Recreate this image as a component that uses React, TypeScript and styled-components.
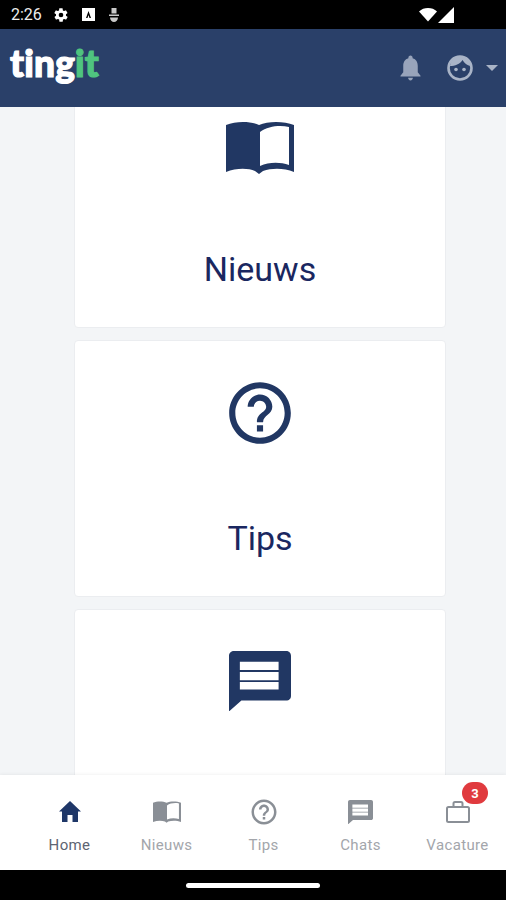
import React from "react";
import styled, { createGlobalStyle } from "styled-components";

const GlobalStyle = createGlobalStyle`
  html, body {
    margin: 0;
    padding: 0;
    background: #000;
  }
  * {
    box-sizing: border-box;
  }
`;

const BookIcon = ({ size, color }: { size: number; color: string }) => (
  <svg width={size} height={(size * 53) / 68} viewBox="0 0 68 53">
    <path
      fill={color}
      fillRule="evenodd"
      d="M0 4C10 0 24 0 33 4 42 0 58 0 68 4V51C58 47 46 47 37 50L33 53 29 50C22 47 10 47 0 51zM34 11V45C43 41 54 41 63 44V6C54 4 42 5 34 11z"
    />
  </svg>
);

const HelpIcon = ({ size, color }: { size: number; color: string }) => (
  <svg width={size} height={size} viewBox="0 0 24 24">
    <path
      fill={color}
      d="M11 18h2v-2h-2v2zm1-16C6.480 2 2 6.480 2 12s4.480 10 10 10 10-4.480 10-10S17.520 2 12 2zm0 18c-4.410 0-8-3.590-8-8s3.590-8 8-8 8 3.590 8 8-3.590 8-8 8zm0-14c-2.210 0-4 1.790-4 4h2c0-1.100.9-2 2-2s2 .9 2 2c0 2-3 1.750-3 5h2c0-2.250 3-2.500 3-5 0-2.210-1.790-4-4-4z"
    />
  </svg>
);

const ChatIcon = ({ size, color }: { size: number; color: string }) => (
  <svg width={size} height={(size * 19.500) / 20} viewBox="2 2 20 19.500">
    <path
      fill={color}
      fillRule="evenodd"
      d="M3.500 2h17C21.400 2 22 2.700 22 3.500v13c0 .9-.7 1.500-1.500 1.500H6L2 21.500V3.500C2 2.700 2.700 2 3.500 2zM5.500 5.500v2.600H18V5.500zM5.500 8.800h12.500v2.600H5.500zM5.500 12v2.400H18V12z"
    />
  </svg>
);

const HomeIcon = () => (
  <svg width="24" height="22" viewBox="0 0 24 22">
    <path fill="#1f3768" d="M12 0 23 10.500h-3V21h-5.500v-7h-5v7H4V10.500H1z" />
  </svg>
);

const BagIcon = () => (
  <svg width="26" height="24" viewBox="0 0 26 24">
    <path
      fill="none"
      stroke="#8a8f96"
      strokeWidth="2"
      d="M3.500 7h19A1.500 1.500 0 0 1 24 8.500v12a1.500 1.500 0 0 1-1.500 1.500h-19A1.500 1.500 0 0 1 2 20.500v-12A1.500 1.500 0 0 1 3.500 7zM8.500 7V3.500A1.500 1.500 0 0 1 10 2h6a1.500 1.500 0 0 1 1.500 1.500V7"
    />
  </svg>
);

const BellIcon = () => (
  <svg width="21" height="26" viewBox="0 0 22 26">
    <path
      fill="#98a4bb"
      d="M11 0c1.300 0 2.200 1 2.200 2.300v.6C17 4 18.600 7 18.600 11v6.500L21.500 21v1H.5v-1l2.900-3.500V11c0-4 1.600-7 5.400-8.100v-.6C8.800 1 9.700 0 11 0zM8.500 23.300h5c0 1.500-1.100 2.700-2.500 2.700s-2.500-1.200-2.500-2.700z"
    />
  </svg>
);

const FaceIcon = () => (
  <svg width="26" height="26" viewBox="0 0 26 26">
    <circle cx="13" cy="13" r="11.500" fill="none" stroke="#a9b4c7" strokeWidth="2.600" />
    <path fill="#a9b4c7" d="M3 11c5 0 10-2 12.500-6 2 3 4.500 5.500 8 6-1-6-5.500-10-10.500-10S4 5 3 11z" />
    <circle cx="9" cy="14.500" r="1.800" fill="#a9b4c7" />
    <circle cx="17" cy="14.500" r="1.800" fill="#a9b4c7" />
  </svg>
);

const GearIcon = () => (
  <svg width="16" height="16" viewBox="0 0 24 24">
    <path
      fill="#fff"
      d="M19.400 13c.1-.3.1-.7.1-1s0-.7-.1-1l2.100-1.600c.2-.2.2-.4.100-.6l-2-3.500c-.1-.2-.4-.3-.6-.2l-2.500 1c-.5-.4-1.100-.7-1.700-1l-.4-2.700c0-.2-.2-.4-.5-.4h-4c-.2 0-.4.200-.5.400l-.4 2.700c-.6.300-1.200.6-1.700 1l-2.500-1c-.2-.1-.5 0-.6.200l-2 3.500c-.1.200-.1.400.1.600L4.600 11c-.1.300-.1.700-.1 1s0 .7.100 1l-2.100 1.600c-.2.200-.2.400-.1.600l2 3.500c.1.200.4.300.6.200l2.500-1c.5.400 1.100.7 1.700 1l.4 2.700c0 .2.200.4.500.4h4c.2 0 .4-.2.500-.4l.4-2.700c.6-.3 1.200-.6 1.700-1l2.500 1c.2.100.5 0 .6-.2l2-3.500c.1-.2.1-.4-.1-.6zM12 15.500a3.500 3.500 0 1 1 0-7 3.500 3.500 0 0 1 0 7z"
    />
  </svg>
);

const AppBoxIcon = () => (
  <svg width="13" height="13" viewBox="0 0 13 13">
    <path fill="#fff" fillRule="evenodd" d="M0 0h13v13H0zM6.500 3 4 10h1.500l1-3 1 3H9z" />
  </svg>
);

const DebugIcon = () => (
  <svg width="12" height="16" viewBox="0 0 12 16">
    <path fill="#c8c8c8" d="M3.500 1h5v5.500h-5zM1 7.500h10v1.500H1zM2 10.500h8C10 13 8 15 6 15s-4-2-4-4.500z" />
  </svg>
);

const WifiIcon = () => (
  <svg width="18" height="15" viewBox="0 0 18 15">
    <path fill="#fff" d="M0 4.500C2.500 2 5.500 1 9 1s6.500 1 9 3.500L9 14.500z" />
  </svg>
);

const SignalIcon = () => (
  <svg width="16" height="16" viewBox="0 0 16 16">
    <path fill="#fff" d="M16 0v16H0z" />
  </svg>
);

const Page = styled.div`
  width: 506px;
  height: 900px;
  display: flex;
  flex-direction: column;
  overflow: hidden;
  font-family: Roboto, "Noto Sans", sans-serif;
  background: #f3f5f7;
`;

const StatusBar = styled.div`
  height: 29px;
  flex: none;
  background: #000;
  display: flex;
  align-items: center;
  justify-content: space-between;
  padding: 0 52px 0 11px;
`;

const StatusGroup = styled.div`
  display: flex;
  align-items: center;
  gap: 13px;
`;

const Clock = styled.span`
  color: #eee;
  font-size: 16px;
  margin-right: -2px;
`;

const SignalGroup = styled.div`
  display: flex;
  align-items: center;
  gap: 1px;
`;

const Header = styled.header`
  height: 78px;
  flex: none;
  background: #2a4069;
  display: flex;
  align-items: center;
  justify-content: space-between;
  padding: 0 8px 0 10px;
`;

const Logo = styled.div`
  font-family: Lato, "Noto Sans", sans-serif;
  font-weight: 900;
  font-size: 37px;
  line-height: 1;
  letter-spacing: 0.2px;
  color: #fff;
  margin-top: -12px;
  -webkit-text-stroke: 1.2px #fff;
`;

const LogoAccent = styled.span`
  color: #4fc47f;
  -webkit-text-stroke: 1.2px #4fc47f;
`;

const HeaderActions = styled.div`
  display: flex;
  align-items: center;
`;

const BellWrap = styled.div`
  display: flex;
  margin-right: 26px;
`;

const Caret = styled.div`
  width: 0;
  height: 0;
  margin-left: 13px;
  border-left: 6px solid transparent;
  border-right: 6px solid transparent;
  border-top: 6px solid #a9b4c7;
`;

const Content = styled.main`
  flex: 1;
  min-height: 0;
  overflow: hidden;
  display: flex;
  flex-direction: column;
  align-items: center;
  gap: 12px;
  padding-left: 14px;
  background: #f3f5f7;
`;

const Card = styled.section<{ $offset?: number }>`
  width: 372px;
  height: 257px;
  flex: none;
  margin-top: ${({ $offset }) => $offset ?? 0}px;
  background: #fff;
  border: 1px solid #ebedf0;
  border-radius: 4px;
  display: flex;
  flex-direction: column;
  align-items: center;
`;

const CardIcon = styled.div<{ $nudge?: number }>`
  height: 62px;
  margin-top: ${({ $nudge }) => 42 + ($nudge ?? 0)}px;
  margin-bottom: ${({ $nudge }) => -($nudge ?? 0)}px;
  display: flex;
  align-items: center;
  justify-content: center;
`;

const CardTitle = styled.h2`
  margin: 71px 0 0;
  font-size: 34px;
  line-height: 44px;
  font-weight: 400;
  color: #1a2760;
`;

const BottomNav = styled.nav`
  height: 95px;
  flex: none;
  background: #fff;
  display: grid;
  grid-template-columns: repeat(5, 97px);
  padding: 0 0 0 21px;
  box-shadow: 0 -1px 3px rgba(0, 0, 0, 0.05);
`;

const NavItem = styled.div`
  position: relative;
  display: flex;
  flex-direction: column;
  align-items: center;
  padding-top: 24px;
`;

const NavIcon = styled.div`
  height: 26px;
  display: flex;
  align-items: center;
  justify-content: center;
`;

const NavLabel = styled.span<{ $active?: boolean }>`
  margin-top: 11px;
  font-size: 15px;
  line-height: 18px;
  letter-spacing: 0.35px;
  white-space: nowrap;
  color: ${({ $active }) => ($active ? "#5d6472" : "#a3a6ab")};
`;

const Badge = styled.span`
  position: absolute;
  top: 7px;
  left: 53px;
  width: 26px;
  height: 22px;
  border-radius: 11px;
  background: #e03a3e;
  color: #fff;
  font-size: 13px;
  font-weight: 700;
  display: flex;
  align-items: center;
  justify-content: center;
`;

const GestureBar = styled.div`
  height: 30px;
  flex: none;
  background: #000;
  display: flex;
  justify-content: center;
  padding-top: 13px;
`;

const GesturePill = styled.div`
  width: 134px;
  height: 5px;
  border-radius: 3px;
  background: #fff;
`;

const navy = "#213763";
const grey = "#8a8f96";

const navItems = [
  { label: "Home", icon: <HomeIcon />, active: true },
  { label: "Nieuws", icon: <BookIcon size={28} color={grey} /> },
  { label: "Tips", icon: <HelpIcon size={30} color={grey} /> },
  { label: "Chats", icon: <ChatIcon size={25} color={grey} /> },
  { label: "Vacature", icon: <BagIcon />, badge: 3 },
];

export default function App() {
  return (
    <Page>
      <GlobalStyle />
      <StatusBar>
        <StatusGroup>
          <Clock>2:26</Clock>
          <GearIcon />
          <AppBoxIcon />
          <DebugIcon />
        </StatusGroup>
        <SignalGroup>
          <WifiIcon />
          <SignalIcon />
        </SignalGroup>
      </StatusBar>
      <Header>
        <Logo>
          ting<LogoAccent>it</LogoAccent>
        </Logo>
        <HeaderActions>
          <BellWrap>
            <BellIcon />
          </BellWrap>
          <FaceIcon />
          <Caret />
        </HeaderActions>
      </Header>
      <Content>
        <Card $offset={-36}>
          <CardIcon $nudge={2}>
            <BookIcon size={68} color={navy} />
          </CardIcon>
          <CardTitle>Nieuws</CardTitle>
        </Card>
        <Card>
          <CardIcon $nudge={-1}>
            <HelpIcon size={74} color={navy} />
          </CardIcon>
          <CardTitle>Tips</CardTitle>
        </Card>
        <Card>
          <CardIcon $nudge={-2}>
            <ChatIcon size={62} color={navy} />
          </CardIcon>
        </Card>
      </Content>
      <BottomNav>
        {navItems.map((item) => (
          <NavItem key={item.label}>
            <NavIcon>{item.icon}</NavIcon>
            <NavLabel $active={item.active}>{item.label}</NavLabel>
            {item.badge && <Badge>{item.badge}</Badge>}
          </NavItem>
        ))}
      </BottomNav>
      <GestureBar>
        <GesturePill />
      </GestureBar>
    </Page>
  );
}
